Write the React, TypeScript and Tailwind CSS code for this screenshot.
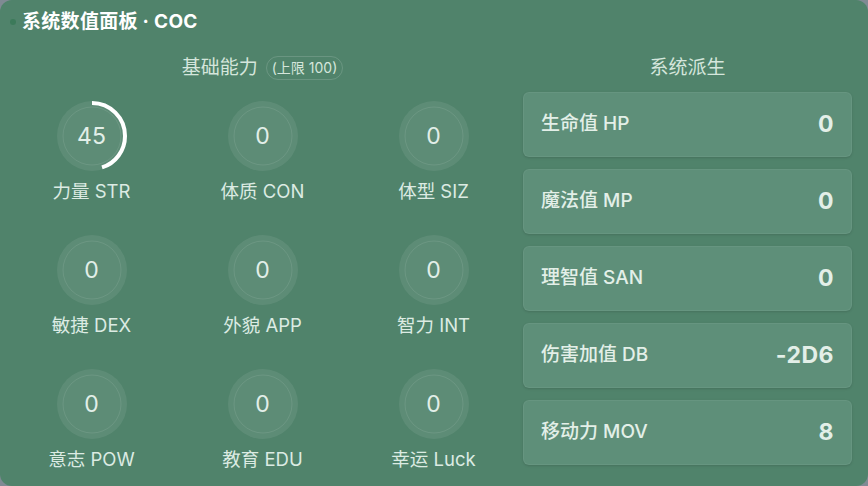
import React from 'react';

const font = { fontFamily: 'Inter, "Noto Sans CJK SC", sans-serif' };

const stats = [
  { label: '力量 STR', value: 45 },
  { label: '体质 CON', value: 0 },
  { label: '体型 SIZ', value: 0 },
  { label: '敏捷 DEX', value: 0 },
  { label: '外貌 APP', value: 0 },
  { label: '智力 INT', value: 0 },
  { label: '意志 POW', value: 0 },
  { label: '教育 EDU', value: 0 },
  { label: '幸运 Luck', value: 0 },
];

const derived = [
  { label: '生命值 HP', value: '0' },
  { label: '魔法值 MP', value: '0' },
  { label: '理智值 SAN', value: '0' },
  { label: '伤害加值 DB', value: '-2D6' },
  { label: '移动力 MOV', value: '8' },
];

function Ring({ value }: { value: number }) {
  const r = 33;
  const c = 2 * Math.PI * r;
  const len = (Math.min(value, 100) / 100) * c;
  return (
    <div className="relative h-[70px] w-[70px]">
      <svg width="70" height="70" viewBox="0 0 70 70" className="absolute inset-0">
        <circle cx="35" cy="35" r="35" fill="rgba(255,255,255,0.08)" />
        <circle cx="35" cy="35" r="29" fill="none" stroke="rgba(255,255,255,0.09)" strokeWidth="1" />
        {value > 0 && (
          <circle
            cx="35"
            cy="35"
            r={r}
            fill="none"
            stroke="#ffffff"
            strokeWidth="4"
            strokeDasharray={`${len} ${c}`}
            transform="rotate(-90 35 35)"
          />
        )}
      </svg>
      <span className="absolute inset-0 flex items-center justify-center text-[23px] text-[#e2efe8]">
        {value}
      </span>
    </div>
  );
}

export default function App() {
  return (
    <div className="h-[486px] w-[868px] bg-[#7f8a93]" style={font}>
      <div className="flex h-full w-full flex-col rounded-[12px] bg-[#50836b]">
        <div className="mt-[10px] flex h-[24px] items-center pl-[10px]">
          <span className="h-[6px] w-[6px] rounded-full bg-[#3c7a5a]" />
          <span className="ml-[6px] text-[19px] font-bold tracking-[0.3px] text-white">系统数值面板 · COC</span>
        </div>

        <div className="mt-[24px] flex">
          <div className="ml-[6px] w-[513px]">
            <div className="flex h-[20px] items-center justify-center gap-[8px]">
              <span className="text-[19px] text-[#d5e6dc]">基础能力</span>
              <span className="rounded-full border border-white/15 px-[5px] text-[14px] leading-[22px] text-[#d5e6dc]">
                (上限 100)
              </span>
            </div>
            <div className="mt-[23px] grid grid-cols-3 gap-y-[32px]">
              {stats.map((s) => (
                <div key={s.label} className="flex flex-col items-center">
                  <Ring value={s.value} />
                  <span className="mt-[8px] text-[18.5px] leading-[24px] text-[#dcebe3]">{s.label}</span>
                </div>
              ))}
            </div>
          </div>

          <div className="ml-[4px] w-[329px]">
            <div className="flex h-[20px] items-center justify-center text-[19px] text-[#d5e6dc]">
              系统派生
            </div>
            <div className="mt-[14px] flex flex-col gap-[12px]">
              {derived.map((d) => (
                <div
                  key={d.label}
                  className="flex h-[65px] items-center justify-between rounded-[6px] border border-white/5 bg-[#5e8f79] pl-[17px] pr-[17px] shadow-sm"
                >
                  <span className="text-[19px] font-medium text-[#e3efe8]">{d.label}</span>
                  <span className="text-[23px] font-bold tracking-[0.5px] text-[#e3efe8]">{d.value}</span>
                </div>
              ))}
            </div>
          </div>
        </div>
      </div>
    </div>
  );
}
